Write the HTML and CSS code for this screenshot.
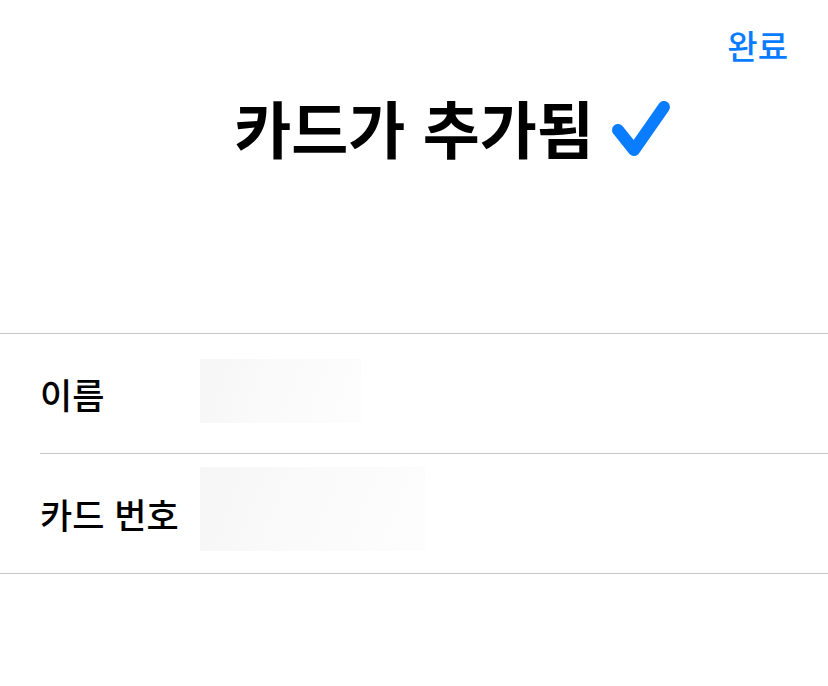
FILE: index.html
```html
<!DOCTYPE html>
<html lang="ko">
<head>
<meta charset="utf-8">
<link rel="stylesheet" href="styles.css">
</head>
<body>
<div class="page">
  <header class="top">
    <span class="done">완료</span>
  </header>
  <div class="title">
    <span class="spacer"></span>
    <h1 class="heading">카드가 추가됨</h1>
    <span class="check">
      <svg width="70" height="70" viewBox="0 0 70 70"><path d="M12 36 L28 56 L58 13" fill="none" stroke="#0a7cff" stroke-width="12" stroke-linecap="round" stroke-linejoin="round"/></svg>
    </span>
  </div>
  <div class="list">
    <div class="row">
      <div class="inner divided">
        <span class="label">이름</span>
        <span class="blur blur-name"></span>
      </div>
    </div>
    <div class="row">
      <div class="inner">
        <span class="label">카드 번호</span>
        <span class="blur blur-number"></span>
      </div>
    </div>
  </div>
</div>
</body>
</html>
```
FILE: styles.css
```css
html, body {
  margin: 0;
  padding: 0;
  background: #ffffff;
}
body {
  font-family: "Noto Sans CJK KR", "Noto Sans", sans-serif;
  color: #000;
}
.page {
  width: 828px;
  height: 686px;
  overflow: hidden;
}
.top {
  display: flex;
  justify-content: flex-end;
  padding: 22px 40px 0 0;
  height: 46px;
}
.done {
  font-size: 33px;
  line-height: 46px;
  font-weight: 500;
  color: #0a7cff;
}
.title {
  display: grid;
  grid-template-columns: 1fr auto 1fr;
  align-items: start;
  margin-top: 24px;
  height: 70px;
}
.heading {
  margin: 0;
  font-size: 62px;
  line-height: 70px;
  font-weight: 700;
}
.check {
  display: flex;
  align-items: center;
  padding-left: 12px;
  padding-top: 2px;
  height: 70px;
}
.check svg {
  display: block;
}
.list {
  margin-top: 171px;
  border-top: 1px solid #c8c8c8;
  border-bottom: 1px solid #c8c8c8;
}
.row {
  padding-left: 40px;
}
.inner {
  display: flex;
  align-items: center;
  height: 119px;
}
.inner.divided {
  border-bottom: 1px solid #c8c8c8;
}
.label {
  width: 160px;
  font-size: 35px;
  line-height: 40px;
  font-weight: 500;
}
.blur {
  display: block;
  background: linear-gradient(110deg, #f6f6f6 0%, #fafafa 45%, #fdfdfd 100%);
}
.blur-name {
  width: 161px;
  height: 64px;
  margin-top: -6px;
}
.blur-number {
  width: 225px;
  height: 84px;
  margin-top: -10px;
}
```
